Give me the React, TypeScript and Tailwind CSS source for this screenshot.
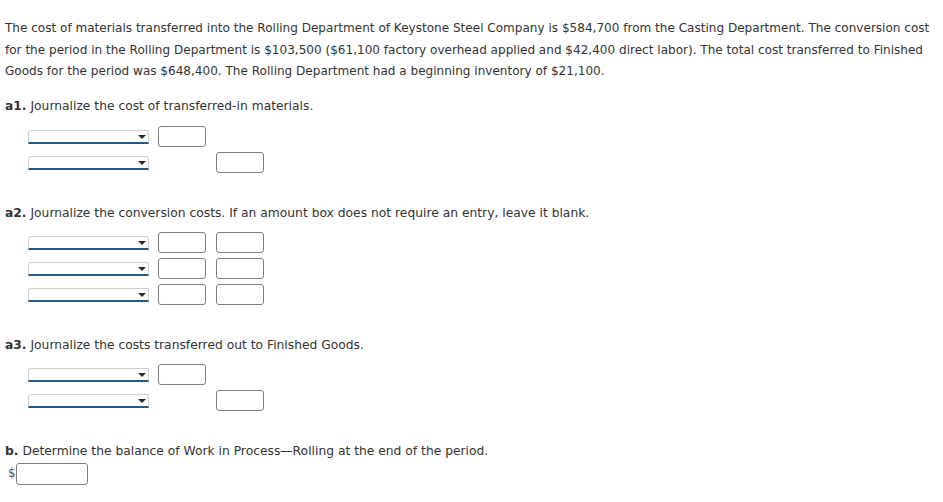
import React from 'react';

const font = { fontFamily: '"DejaVu Sans", Verdana, sans-serif' };

function Select() {
  return (
    <div className="relative w-[121px] h-[14px] bg-white border-t border-l border-r border-[#cfcfcf] rounded-t-[3px] border-b-[2px] border-b-[#1f5b8a] shrink-0">
      <span className="absolute right-[2px] top-[4px] w-0 h-0 border-l-[4px] border-r-[4px] border-t-[4px] border-l-transparent border-r-transparent border-t-[#2a2a2a]" />
    </div>
  );
}

function Box({ hidden }: { hidden?: boolean }) {
  return (
    <div
      className={`w-[48px] h-[21px] shrink-0 rounded-[3px] border border-[#7d7d7d] bg-white ${hidden ? 'invisible' : ''}`}
    />
  );
}

// debit = box in first column, credit = box in second column
function Row({ debit, credit }: { debit: boolean; credit: boolean }) {
  return (
    <div className="flex items-center h-[26px] pl-[28px]">
      <Select />
      <div className="ml-[9px]">
        <Box hidden={!debit} />
      </div>
      <div className="ml-[10px]">
        <Box hidden={!credit} />
      </div>
    </div>
  );
}

function Heading({ label, children }: { label: string; children: React.ReactNode }) {
  return (
    <div className="h-[20px] leading-[20px] pl-[5px] whitespace-nowrap">
      <span className="font-bold">{label}</span> {children}
    </div>
  );
}

export default function App() {
  return (
    <div className="w-[943px] h-[502px] bg-white text-[#333] text-[12.3px] overflow-hidden" style={font}>
      <p className="pt-[18px] px-[5px] leading-[21.5px] whitespace-nowrap text-[12.05px]">
        The cost of materials transferred into the Rolling Department of Keystone Steel Company is $584,700 from the
        Casting Department. The conversion cost
        <br />
        for the period in the Rolling Department is $103,500 ($61,100 factory overhead applied and $42,400 direct
        labor). The total cost transferred to Finished
        <br />
        Goods for the period was $648,400. The Rolling Department had a beginning inventory of $21,100.
      </p>

      <div className="mt-[13px]">
        <Heading label="a1.">Journalize the cost of transferred-in materials.</Heading>
      </div>
      <div className="mt-[8px]">
        <Row debit credit={false} />
        <Row debit={false} credit />
      </div>

      <div className="mt-[27px]">
        <Heading label="a2.">
          Journalize the conversion costs. If an amount box does not require an entry, leave it blank.
        </Heading>
      </div>
      <div className="mt-[7px]">
        <Row debit credit />
        <Row debit credit />
        <Row debit credit />
      </div>

      <div className="mt-[27px]">
        <Heading label="a3.">Journalize the costs transferred out to Finished Goods.</Heading>
      </div>
      <div className="mt-[7px]">
        <Row debit credit={false} />
        <Row debit={false} credit />
      </div>

      <div className="mt-[27px]">
        <Heading label="b.">Determine the balance of Work in Process—Rolling at the end of the period.</Heading>
      </div>
      <div className="mt-[2px] flex items-center pl-[8px]">
        <span className="text-[12px] text-[#555] leading-[21px]">$</span>
        <div className="w-[72px] h-[22px] rounded-[3px] border border-[#7d7d7d] bg-white" />
      </div>
    </div>
  );
}
